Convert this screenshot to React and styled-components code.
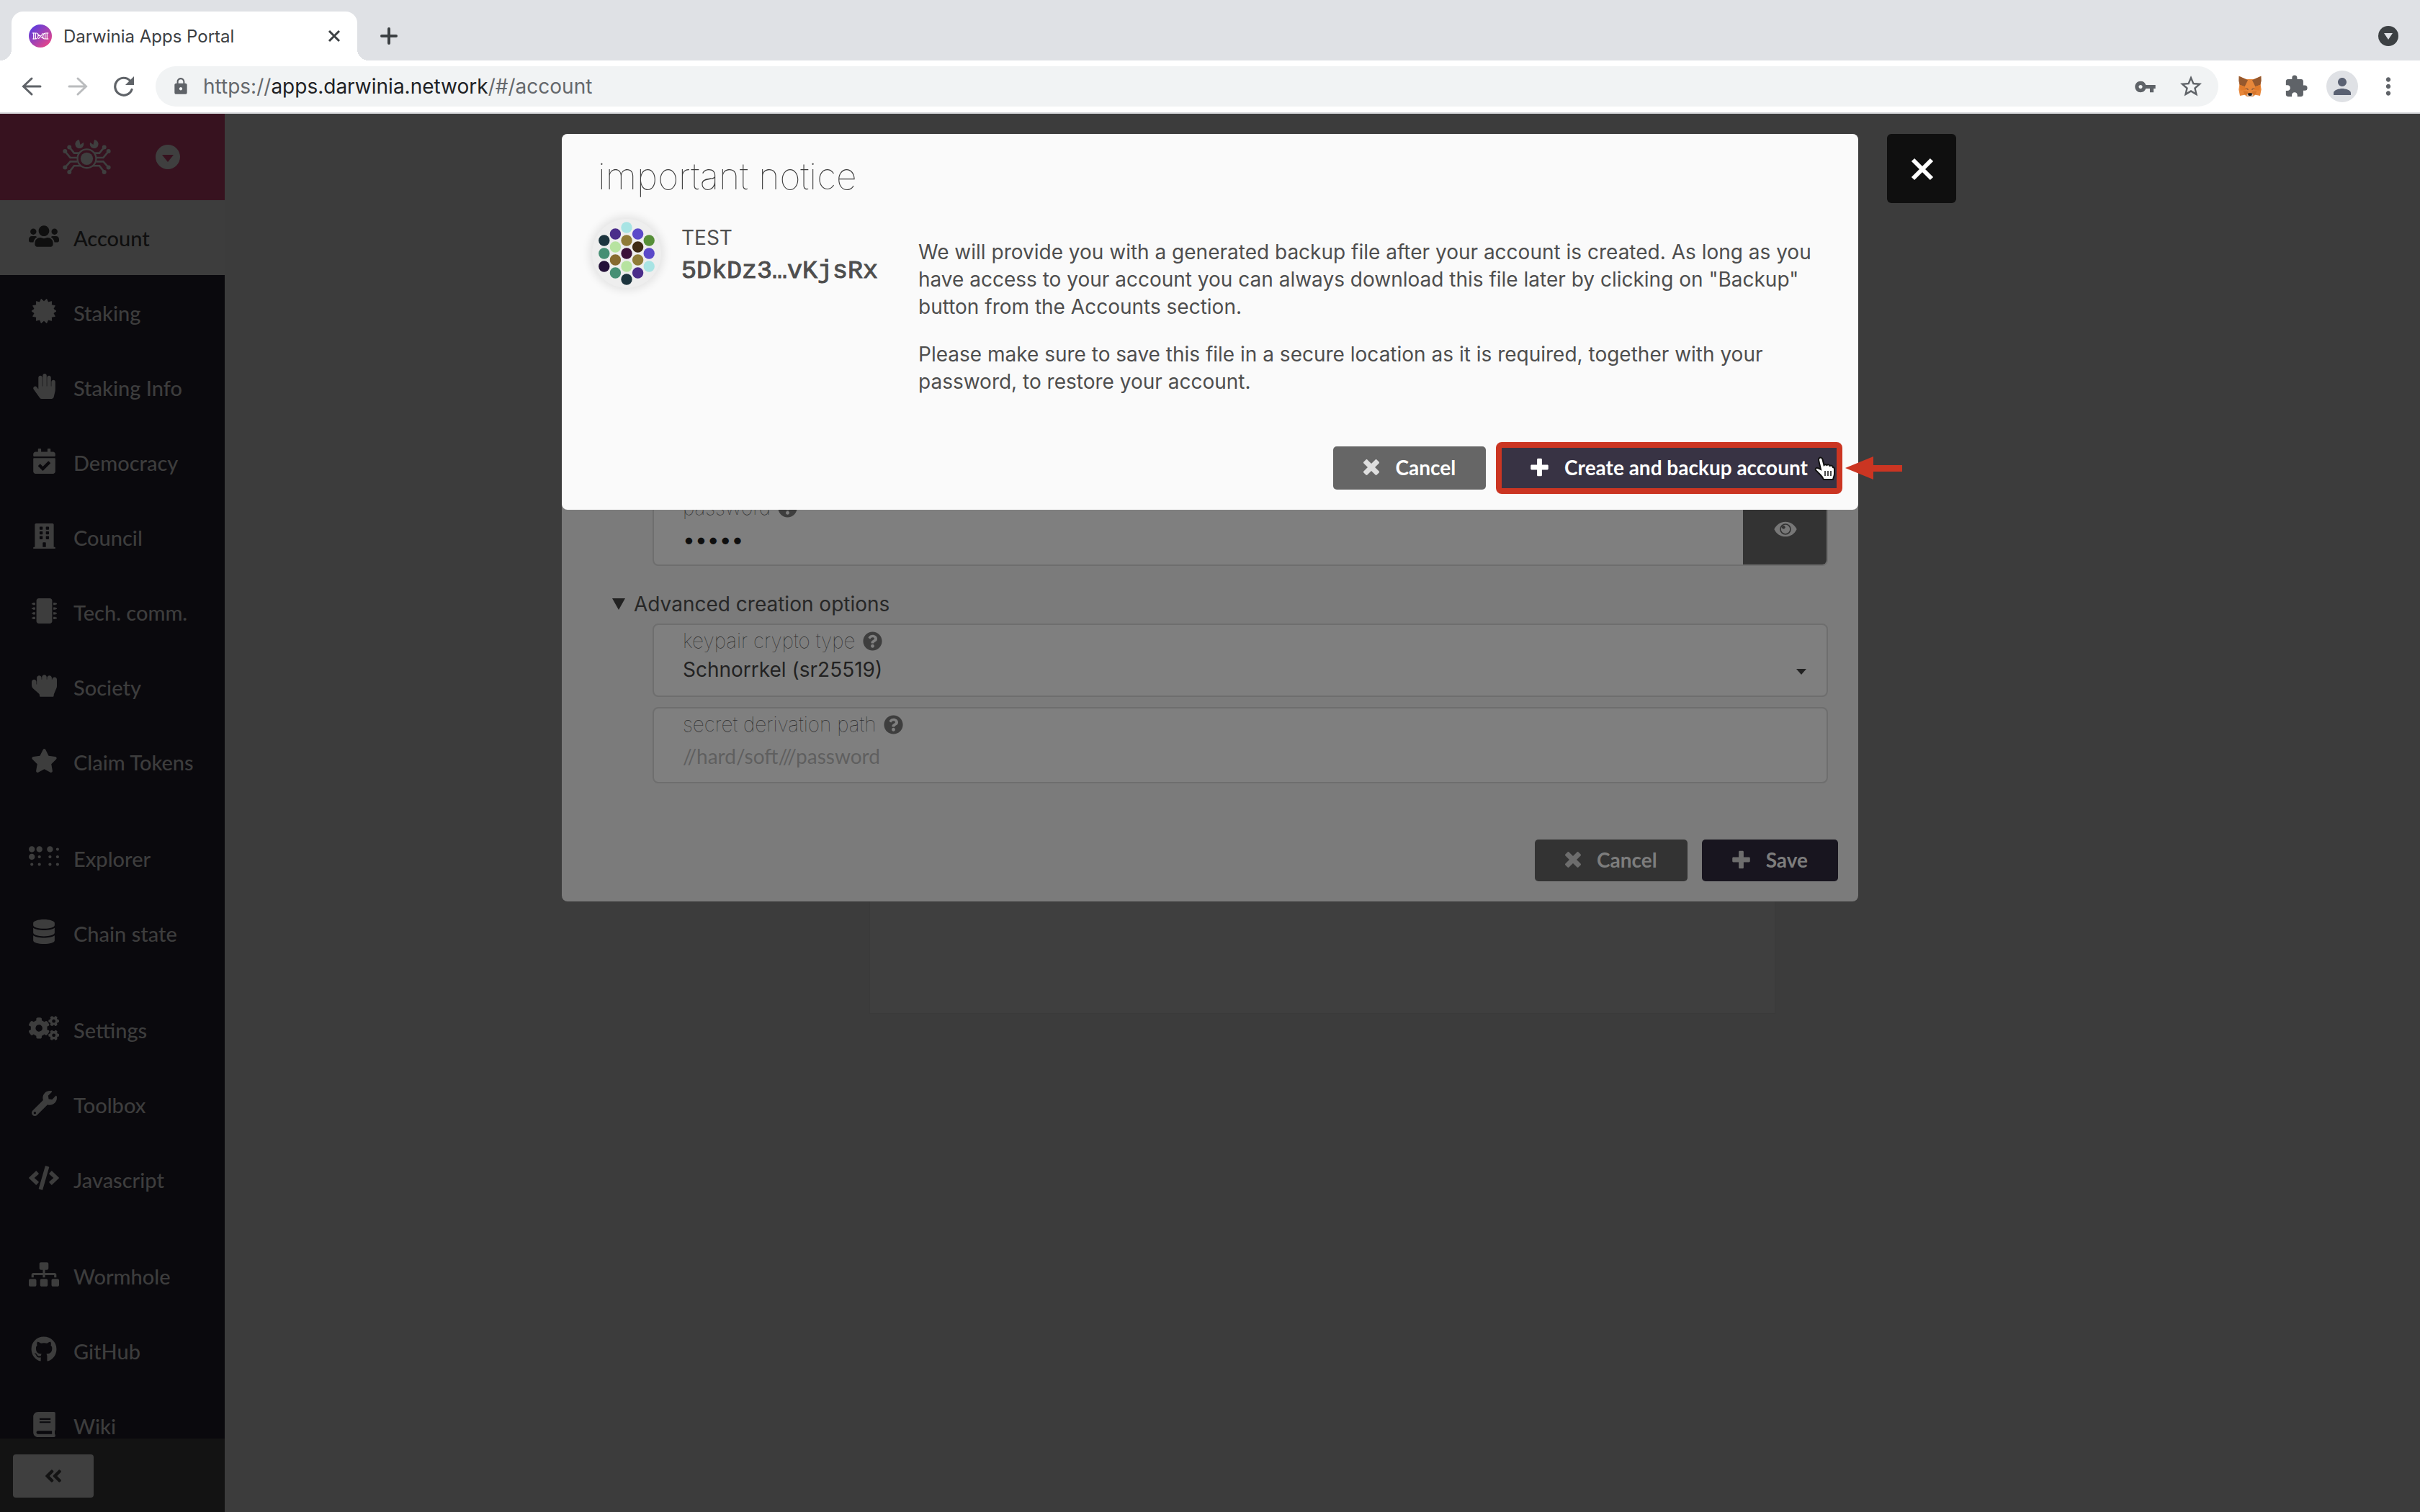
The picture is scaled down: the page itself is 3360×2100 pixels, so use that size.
import React from "react";
import styled, { createGlobalStyle } from "styled-components";
import {
  FaUsers,
  FaHandPaper,
  FaCalendarCheck,
  FaBuilding,
  FaMicrochip,
  FaHandRock,
  FaStar,
  FaBraille,
  FaDatabase,
  FaCogs,
  FaWrench,
  FaCode,
  FaSitemap,
  FaGithub,
  FaBook,
  FaAngleDoubleLeft,
  FaQuestionCircle,
} from "react-icons/fa";
import { MdVpnKey, MdStarBorder, MdExtension, MdPerson, MdLock, MdMoreVert } from "react-icons/md";

const sans = `Inter, "Liberation Sans", sans-serif`;
const lato = `Lato, "Liberation Sans", sans-serif`;

const GlobalStyle = createGlobalStyle`
  *, *::before, *::after { box-sizing: border-box; }
  body { margin: 0; background: #3c3c3c; font-family: ${sans}; }
  button, input, select { font: inherit; color: inherit; border: 0; padding: 0; background: none; }
  svg { display: block; flex: none; }
  p, h2 { margin: 0; }
`;

const Screen = styled.div`
  height: 100vh;
  display: flex;
  flex-direction: column;
  overflow: hidden;
`;

/* ---------- browser chrome ---------- */

const TabStrip = styled.div`
  display: flex;
  align-items: flex-end;
  height: 84px;
  padding: 0 30px 0 16px;
  background: #dfe1e5;
`;

const Tab = styled.div`
  position: relative;
  display: flex;
  align-items: center;
  width: 480px;
  height: 68px;
  padding: 0 22px 0 24px;
  border-radius: 16px 16px 0 0;
  background: #fff;
  color: #3c4043;
  font-size: 24px;

  &::before, &::after {
    content: "";
    position: absolute;
    bottom: 0;
    width: 16px;
    height: 16px;
  }
  &::before { right: 100%; background: radial-gradient(circle at 0 0, transparent 16px, #fff 16px); }
  &::after { left: 100%; background: radial-gradient(circle at 100% 0, transparent 16px, #fff 16px); }
`;

const TabTitle = styled.span`
  flex: 1;
  margin-left: 16px;
`;

const ChromeButton = styled.button`
  display: flex;
  align-items: center;
  justify-content: center;
  width: ${(p) => p.$w || 64}px;
  height: ${(p) => p.$h || 68}px;
  color: ${(p) => p.$color || "#5f6368"};
`;

const NewTab = styled(ChromeButton)`
  margin-left: 12px;
`;

const StripEnd = styled.div`
  margin-left: auto;
`;

const Toolbar = styled.div`
  display: flex;
  align-items: center;
  height: 74px;
  padding: 0 12px;
  border-bottom: 2px solid #d6d7da;
  background: #fff;
`;

const AddressBar = styled.div`
  flex: 1;
  display: flex;
  align-items: center;
  height: 56px;
  margin: 0 12px;
  padding: 0 6px 0 22px;
  border-radius: 28px;
  background: #f1f3f4;
  color: #5f6368;
`;

const Address = styled.div`
  flex: 1;
  margin-left: 18px;
  font-size: 28px;
  line-height: 36px;
  color: #65686c;
  b { font-weight: 400; color: #202124; }
`;

const Avatar = styled.span`
  display: flex;
  align-items: center;
  justify-content: center;
  width: 44px;
  height: 44px;
  border-radius: 50%;
  background: #dfe1e5;
  color: #5a6172;
`;

/* ---------- app shell ---------- */

const Page = styled.div`
  position: relative;
  flex: 1;
  display: flex;
  min-height: 0;
`;

const Sidebar = styled.aside`
  display: flex;
  flex-direction: column;
  width: 312px;
  background: #0a090d;
  font-family: ${lato};
`;

const Brand = styled.button`
  display: flex;
  align-items: center;
  gap: 62px;
  flex: none;
  height: 120px;
  padding-left: 87px;
  background: #37121f;
  color: #3f3f3f;
`;

const Nav = styled.nav`
  flex: 1;
  display: flex;
  flex-direction: column;
  gap: 30px;
  min-height: 0;
  overflow: hidden;
`;

const NavItem = styled.a`
  display: flex;
  align-items: center;
  gap: 20px;
  height: 104px;
  padding: 2px 0 0 40px;
  background: ${(p) => (p.$active ? "#3d3d3d" : "transparent")};
  color: ${(p) => (p.$active ? "#0f0f0f" : "#3d3d3d")};
  font-size: 29px;
  font-weight: 500;
  line-height: 36px;
  text-decoration: none;
`;

const NavIcon = styled.span`
  display: flex;
  justify-content: center;
  width: 42px;
  margin-bottom: 6px;
`;

const SidebarFoot = styled.div`
  flex: none;
  height: 102px;
  padding: 22px 18px;
  background: #131313;
`;

const Collapse = styled.button`
  display: flex;
  align-items: center;
  justify-content: center;
  width: 112px;
  height: 60px;
  border-radius: 4px;
  background: #3f3f3f;
  color: #131313;
`;

const Main = styled.main`
  flex: 1;
  display: flex;
  justify-content: center;
  align-items: flex-start;
  padding-top: 250px;
  background: #3c3c3c;
`;

const Card = styled.section`
  width: 1258px;
  height: 1000px;
  border: 1px solid #3a3a3a;
  background: #3f3f3f;
`;

/* ---------- dialogs ---------- */

const Overlay = styled.div`
  position: absolute;
  inset: 28px 0 auto;
  display: grid;
  grid-template-columns: 1fr 1800px 1fr;
  align-items: start;
`;

const Dialog = styled.section`
  grid-column: 2;
  grid-row: 1;
  padding: 28px 28px 28px 42px;
  border-radius: 8px;
  background: #fafafa;
  color: #4e4e4e;
  font-size: 28px;
  line-height: 38px;
`;

const BackDialog = styled(Dialog)`
  padding-top: 496px;
  background: #7b7b7b;
  color: #272727;
`;

const CloseButton = styled.button`
  grid-column: 3;
  grid-row: 1;
  display: flex;
  align-items: center;
  justify-content: center;
  width: 96px;
  height: 96px;
  margin-left: 40px;
  padding: 2px 0 0 2px;
  border-radius: 6px;
  background: #0f0f0f;
  color: #fff;
`;

const Title = styled.h2`
  padding: 0 8px;
  font-size: 50px;
  font-weight: 100;
  line-height: 62px;
  color: #3c3c3c;
`;

const Notice = styled.div`
  display: grid;
  grid-template-columns: 453px 1fr;
  padding: 28px 14px 0 0;
`;

const Identity = styled.div`
  display: flex;
  align-items: flex-start;
  gap: 28px;
`;

const Identicon = styled.span`
  border-radius: 50%;
  background: #eee;
  box-shadow: 0 0 12px 4px rgba(0, 0, 0, 0.09);
`;

const Names = styled.div`
  display: flex;
  flex-direction: column;
  padding-top: 7px;
`;

const AccountHash = styled.code`
  font-family: "Liberation Mono", monospace;
  font-size: 35px;
  line-height: 56px;
  -webkit-text-stroke: 1px currentColor;
`;

const Copy = styled.div`
  display: flex;
  flex-direction: column;
  gap: 28px;
  padding-top: 27px;
`;

const Actions = styled.div`
  display: flex;
  justify-content: flex-end;
  gap: 20px;
  padding-top: ${(p) => p.$top}px;
`;

const Button = styled.button`
  display: flex;
  align-items: center;
  gap: 22px;
  height: ${(p) => p.$h || 60}px;
  padding: 0 42px 2px;
  border-radius: ${(p) => (p.$marked ? 2 : 5)}px;
  background: ${(p) => p.$bg};
  color: ${(p) => p.$ink || "#fff"};
  font-family: ${lato};
  font-weight: 700;
  white-space: nowrap;
  outline: ${(p) => (p.$marked ? "8px solid #cb3522" : "none")};
  outline-offset: -2px;
`;

const Marked = styled.div`
  position: relative;
`;

const Cursor = styled.span`
  position: absolute;
  right: 3px;
  top: 14px;
`;

const Arrow = styled.span`
  position: absolute;
  left: calc(100% + 10px);
  top: 14px;
`;

const Fields = styled.div`
  display: flex;
  flex-direction: column;
  gap: 14px;
  padding: 0 14px 0 84px;
`;

const Field = styled.div`
  display: grid;
  grid-template-columns: 1fr auto;
  min-height: ${(p) => p.$h}px;
  border: 2px solid #6e6e6e;
  border-radius: 8px;
  background: #7f7f7f;
  overflow: hidden;
`;

const FieldBody = styled.div`
  display: flex;
  flex-direction: column;
  justify-content: center;
  gap: ${(p) => p.$gap}px;
  padding: 0 24px 14px 40px;
`;

const Label = styled.label`
  display: flex;
  align-items: center;
  gap: 10px;
  font-weight: 100;
  line-height: 38px;
  color: #2c2c2c;
  svg { color: #3e3e3e; }
`;

const Input = styled.input`
  width: 100%;
  height: 38px;
  font-family: ${(p) => (p.type === "password" ? sans : lato)};
  font-size: ${(p) => (p.type === "password" ? 30 : 28)}px;
  color: #0f0f0f;
  outline: none;
  &::placeholder { color: #5f5f5f; opacity: 1; }
`;

const SelectRow = styled.div`
  display: flex;
  align-items: center;
  svg { margin: 6px 4px 0 0; }
`;

const Select = styled.select`
  flex: 1;
  appearance: none;
  height: 38px;
  color: #222;
  outline: none;
`;

const Reveal = styled.button`
  display: flex;
  justify-content: center;
  width: 118px;
  margin: -2px;
  padding-top: 42px;
  background: #333;
  color: #777;
`;

const Advanced = styled.details`
  padding-top: 34px;
`;

const Summary = styled.summary`
  display: flex;
  align-items: center;
  gap: 12px;
  padding: 0 0 8px 28px;
  list-style: none;
`;

/* ---------- drawings ---------- */

const Favicon = () => (
  <svg width="32" height="32" viewBox="0 0 96 96">
    <defs>
      <linearGradient id="fav" x1="0.1" y1="0.1" x2="0.85" y2="0.9">
        <stop offset="0" stopColor="#5a3be0" />
        <stop offset="1" stopColor="#e5468a" />
      </linearGradient>
    </defs>
    <circle cx="48" cy="48" r="48" fill="url(#fav)" />
    <g stroke="#fff" strokeWidth="3.5" fill="none">
      <path d="M14 36h18c12 0 8 24-4 24H16M82 60H66c-12 0-8-24 4-24h12M20 34v28M28 36v24M36 40l24 18M60 36L40 60M68 36v24M76 34v28" />
    </g>
  </svg>
);

const TabClose = () => (
  <svg width="20" height="20" viewBox="0 0 20 20" stroke="#3c4043" strokeWidth="3">
    <path d="M3 3l14 14M17 3L3 17" />
  </svg>
);

const NewTabPlus = () => (
  <svg width="26" height="26" viewBox="0 0 26 26" stroke="#3c4043" strokeWidth="4" strokeLinecap="round">
    <path d="M13 3v20M3 13h20" />
  </svg>
);

const TabSearch = () => (
  <svg width="28" height="28" viewBox="0 0 28 28">
    <circle cx="14" cy="14" r="14" fill="#3c4043" />
    <path d="M8 10h12l-6 9z" fill="#dfe1e5" />
  </svg>
);

const ArrowGlyph = ({ forward }) => (
  <svg width="28" height="28" viewBox="0 0 28 28" fill="none" stroke="currentColor" strokeWidth="3" strokeLinecap="round">
    {forward ? <path d="M2 14h23M14 3l11.500 11L14 25" /> : <path d="M26 14H3M14 3L2.500 14 14 25" />}
  </svg>
);

const Reload = () => (
  <svg width="28" height="28" viewBox="0 0 28 28">
    <path d="M25 18.500A12 12 0 1 1 22.500 6" fill="none" stroke="currentColor" strokeWidth="3.200" strokeLinecap="round" />
    <path d="M28 0v12H16z" fill="currentColor" />
  </svg>
);

const Fox = () => (
  <svg width="32" height="30" viewBox="0 0 96 90">
    <path d="M2 2l30 13h32L94 2l-2 36 3 20-5 26-20-4-10 8H36l-10-8-20 4L1 58l3-20z" fill="#e8873a" />
    <path d="M2 2l37 17-13 27L5 38 1 22z M94 2L57 19l13 27 21-8 4-16z" fill="#95582e" />
    <path d="M5 38l21 8 6 14-24 2z M91 38l-21 8-6 14 24 2z" fill="#e07a2b" />
    <path d="M27 52l13 3 1 6z M69 52l-13 3-1 6z" fill="#6b4a3c" />
    <path d="M20 64l18 2 4 16-18-4z M76 64l-18 2-4 16 18-4z" fill="#d6762c" />
    <path d="M34 80l6-5h16l6 5-6 9H40z" fill="#d7c2b3" />
    <path d="M40 73h16v8l-4 3h-8l-4-3z" fill="#1a1a1a" />
  </svg>
);

const Half = () => (
  <g>
    <path d="M287 552l20 25h30M269 569l22 27h30M269 637l22-25h30M287 656l20-26h30" />
    <g stroke="none" fill="currentColor">
      <circle cx="287" cy="552" r="9" />
      <circle cx="269" cy="569" r="9" />
      <circle cx="269" cy="637" r="9" />
      <circle cx="287" cy="656" r="9" />
      <path d="M328 521a18 18 0 1 0 18 11l-13 10z" />
    </g>
  </g>
);

const Crab = () => (
  <svg width="67" height="50" viewBox="259 518 202 150" fill="none" stroke="currentColor" strokeWidth="8">
    <Half />
    <g transform="translate(720 0) scale(-1 1)">
      <Half />
    </g>
    <circle cx="360" cy="600" r="39" fill="#37121f" strokeWidth="7" />
    <circle cx="360" cy="600" r="26" fill="currentColor" stroke="none" />
  </svg>
);

const BrandCaret = () => (
  <svg width="34" height="34" viewBox="0 0 34 34">
    <circle cx="17" cy="17" r="17" fill="currentColor" />
    <path d="M9 14h16l-8 10z" fill="#37121f" />
  </svg>
);

const burst = Array.from({ length: 28 }, (_, i) => {
  const r = i % 2 ? 14 : 18;
  const a = ((i + 1) * Math.PI) / 14;
  return `${(18 + r * Math.sin(a)).toFixed(2)},${(18 - r * Math.cos(a)).toFixed(2)}`;
}).join(" ");

const Burst = () => (
  <svg width="36" height="36" viewBox="-1 -1 38 38">
    <polygon points={burst} fill="currentColor" stroke="currentColor" strokeWidth="1" strokeLinejoin="round" />
  </svg>
);

const Cross = ({ color = "currentColor" }) => (
  <svg width="22" height="30" viewBox="0 0 384 512" fill={color}>
    <path d="M323.100 441l53.900-53.900c9.400-9.400 9.400-24.500 0-33.900L279.800 256l97.200-97.200c9.400-9.400 9.400-24.500 0-33.900L323.100 71c-9.400-9.400-24.500-9.400-33.900 0L192 168.200 94.800 71c-9.400-9.400-24.500-9.400-33.900 0L7 124.900c-9.400 9.400-9.400 24.500 0 33.900l97.200 97.200L7 353.200c-9.400 9.400-9.400 24.500 0 33.900L60.900 441c9.400 9.400 24.500 9.400 33.900 0l97.200-97.200 97.200 97.200c9.300 9.300 24.500 9.300 33.900 0z" />
  </svg>
);

const Plus = ({ color = "currentColor" }) => (
  <svg width="25" height="28" viewBox="0 0 448 512" fill={color}>
    <path d="M448 294.200v-76.400c0-13.300-10.700-24-24-24H286.200V56c0-13.300-10.700-24-24-24h-76.400c-13.300 0-24 10.700-24 24v137.800H24c-13.300 0-24 10.700-24 24v76.400c0 13.300 10.700 24 24 24h137.800V456c0 13.300 10.700 24 24 24h76.400c13.300 0 24-10.700 24-24V318.200H424c13.300 0 24-10.700 24-24z" />
  </svg>
);

const CloseGlyph = () => (
  <svg width="34" height="34" viewBox="0 0 34 34" stroke="currentColor" strokeWidth="6">
    <path d="M4 4l26 26M30 4L4 30" />
  </svg>
);

const Eye = () => (
  <svg width="32" height="22" viewBox="0 0 96 64">
    <path d="M1 32C10 12 28 1 48 1s38 11 47 31C86 52 68 63 48 63S10 52 1 32z" fill="currentColor" />
    <circle cx="48" cy="32" r="21" fill="none" stroke="#333" strokeWidth="5" />
    <circle cx="40" cy="24" r="7" fill="#333" />
  </svg>
);

const Triangle = ({ w, h }) => (
  <svg width={w} height={h} viewBox="0 0 18 16" preserveAspectRatio="none">
    <path d="M0 0h18L9 16z" fill="#222" />
  </svg>
);

const RedArrow = () => (
  <svg width="79" height="32" viewBox="0 0 79 32">
    <path d="M0 16L39 0v12h40v9H39v11z" fill="#cb3522" />
  </svg>
);

const Hand = () => (
  <svg width="30" height="34" viewBox="0 0 30 34">
    <path
      d="M7 2c2-1 4 0 4.500 2l2 8c1-1 3-1 4 0 1-1 3-1 4 1 2-1 4 0 4.500 2 1.500 0 2 1 2 3v6c0 3-1 4-2 8H13c-1-3-3-5-5-7l-6-6c-1-2 1-4 3-3l4 2L6 5c0-1 0-2 1-3z"
      fill="#fff"
      stroke="#111"
      strokeWidth="2"
    />
    <path d="M15 20v7M19 20v7M23 20v7" stroke="#111" strokeWidth="1.500" />
  </svg>
);

const dots = [
  [0, -4, "#a8e4e4"], [0, -2, "#8f7c38"], [0, 0, "#3b1138"], [0, 2, "#b7e3a0"], [0, 4, "#1c343e"],
  [-1, -3, "#4b2d8a"], [-1, -1, "#b7e3a0"], [-1, 1, "#876a30"], [-1, 3, "#468f74"],
  [1, -3, "#5b49c9"], [1, -1, "#3e2b15"], [1, 1, "#8f7c38"], [1, 3, "#4b2d8a"],
  [-2, -2, "#1c343e"], [-2, 0, "#468f74"], [-2, 2, "#241139"],
  [2, -2, "#568f38"], [2, 0, "#5b49c9"], [2, 2, "#a8e4e4"],
];

const Dots = () => (
  <svg width="96" height="96" viewBox="-48 -48 96 96">
    {dots.map(([x, y, c]) => (
      <circle key={`${x},${y}`} cx={x * 15.6} cy={y * 9} r="7.7" fill={c} />
    ))}
  </svg>
);

/* ---------- content ---------- */

const groups = [
  [
    { label: "Account", icon: <FaUsers size={42} />, active: true },
    { label: "Staking", icon: <Burst /> },
    { label: "Staking Info", icon: <FaHandPaper size={35} /> },
    { label: "Democracy", icon: <FaCalendarCheck size={35} /> },
    { label: "Council", icon: <FaBuilding size={35} /> },
    { label: "Tech. comm.", icon: <FaMicrochip size={35} /> },
    { label: "Society", icon: <FaHandRock size={35} /> },
    { label: "Claim Tokens", icon: <FaStar size={37} /> },
  ],
  [
    { label: "Explorer", icon: <FaBraille size={42} /> },
    { label: "Chain state", icon: <FaDatabase size={34} /> },
  ],
  [
    { label: "Settings", icon: <FaCogs size={42} /> },
    { label: "Toolbox", icon: <FaWrench size={35} /> },
    { label: "Javascript", icon: <FaCode size={42} /> },
  ],
  [
    { label: "Wormhole", icon: <FaSitemap size={42} /> },
    { label: "GitHub", icon: <FaGithub size={36} /> },
    { label: "Wiki", icon: <FaBook size={35} /> },
  ],
];

const Chrome = () => (
  <header>
    <TabStrip>
      <Tab>
        <Favicon />
        <TabTitle>Darwinia Apps Portal</TabTitle>
        <button aria-label="Close tab"><TabClose /></button>
      </Tab>
      <NewTab aria-label="New tab"><NewTabPlus /></NewTab>
      <StripEnd>
        <ChromeButton $w={28} aria-label="Search tabs"><TabSearch /></ChromeButton>
      </StripEnd>
    </TabStrip>
    <Toolbar>
      <ChromeButton $h={56} aria-label="Back"><ArrowGlyph /></ChromeButton>
      <ChromeButton $h={56} $color="#babcbe" aria-label="Forward"><ArrowGlyph forward /></ChromeButton>
      <ChromeButton $h={56} aria-label="Reload"><Reload /></ChromeButton>
      <AddressBar>
        <MdLock size={26} />
        <Address>https://<b>apps.darwinia.network</b>/#/account</Address>
        <ChromeButton $h={56} aria-label="Passwords"><MdVpnKey size={31} /></ChromeButton>
        <ChromeButton $h={56} aria-label="Bookmark"><MdStarBorder size={36} /></ChromeButton>
      </AddressBar>
      <ChromeButton $h={56} aria-label="MetaMask"><Fox /></ChromeButton>
      <ChromeButton $h={56} aria-label="Extensions"><MdExtension size={34} /></ChromeButton>
      <ChromeButton $h={56} aria-label="Profile"><Avatar><MdPerson size={36} /></Avatar></ChromeButton>
      <ChromeButton $h={56} aria-label="Menu"><MdMoreVert size={38} /></ChromeButton>
    </Toolbar>
  </header>
);

const Help = () => <FaQuestionCircle size={27} />;

export default function App() {
  return (
    <Screen>
      <GlobalStyle />
      <Chrome />
      <Page>
        <Sidebar>
          <Brand aria-label="Select network">
            <Crab />
            <BrandCaret />
          </Brand>
          <Nav>
            {groups.map((items) => (
              <div key={items[0].label}>
                {items.map((it) => (
                  <NavItem key={it.label} href="#" $active={it.active}>
                    <NavIcon>{it.icon}</NavIcon>
                    {it.label}
                  </NavItem>
                ))}
              </div>
            ))}
          </Nav>
          <SidebarFoot>
            <Collapse aria-label="Collapse sidebar"><FaAngleDoubleLeft size={28} /></Collapse>
          </SidebarFoot>
        </Sidebar>
        <Main>
          <Card />
        </Main>

        <Overlay>
          <BackDialog>
            <Fields>
              <Field $h={104}>
                <FieldBody $gap={6}>
                  <Label htmlFor="password">password <Help /></Label>
                  <Input id="password" type="password" defaultValue="12345" />
                </FieldBody>
                <Reveal aria-label="Show password"><Eye /></Reveal>
              </Field>
            </Fields>
            <Advanced open>
              <Summary><Triangle w={18} h={16} />Advanced creation options</Summary>
              <Fields>
                <Field $h={102}>
                  <FieldBody $gap={2}>
                    <Label htmlFor="crypto">keypair crypto type <Help /></Label>
                    <SelectRow>
                      <Select id="crypto" defaultValue="sr25519">
                        <option value="sr25519">Schnorrkel (sr25519)</option>
                      </Select>
                      <Triangle w={14} h={8} />
                    </SelectRow>
                  </FieldBody>
                </Field>
                <Field $h={106}>
                  <FieldBody $gap={6}>
                    <Label htmlFor="path">secret derivation path <Help /></Label>
                    <Input id="path" type="text" placeholder="//hard/soft///password" />
                  </FieldBody>
                </Field>
              </Fields>
            </Advanced>
            <Actions $top={78}>
              <Button $h={58} $bg="#333" $ink="#7d7d7d"><Cross color="#6d6d6d" />Cancel</Button>
              <Button $h={58} $bg="#18151f" $ink="#7d7d7d"><Plus color="#6d6d6d" />Save</Button>
            </Actions>
          </BackDialog>

          <Dialog role="dialog" aria-label="important notice">
            <Title>important notice</Title>
            <Notice>
              <Identity>
                <Identicon><Dots /></Identicon>
                <Names>
                  <span>TEST</span>
                  <AccountHash>5DkDz3…vKjsRx</AccountHash>
                </Names>
              </Identity>
              <Copy>
                <p>
                  We will provide you with a generated backup file after your account is created. As long as you have
                  access to your account you can always download this file later by clicking on "Backup" button from
                  the Accounts section.
                </p>
                <p>
                  Please make sure to save this file in a secure location as it is required, together with your
                  password, to restore your account.
                </p>
              </Copy>
            </Notice>
            <Actions $top={71}>
              <Button $bg="#666"><Cross color="#dedede" />Cancel</Button>
              <Marked>
                <Button $bg="#383344" $marked><Plus />Create and backup account</Button>
                <Cursor><Hand /></Cursor>
                <Arrow><RedArrow /></Arrow>
              </Marked>
            </Actions>
          </Dialog>
          <CloseButton aria-label="Close"><CloseGlyph /></CloseButton>
        </Overlay>
      </Page>
    </Screen>
  );
}
